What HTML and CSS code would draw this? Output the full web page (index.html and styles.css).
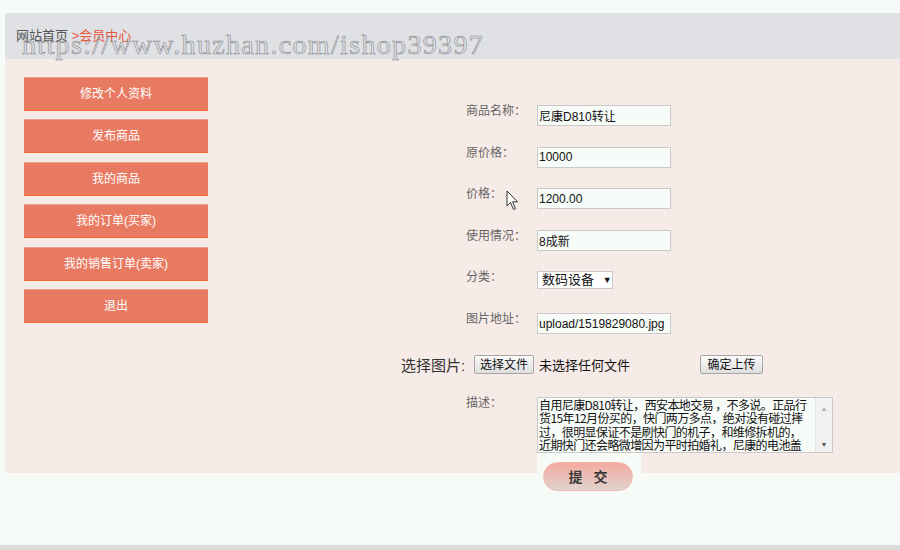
FILE: index.html
```html
<!DOCTYPE html>
<html lang="zh-CN">

<head>
    <meta charset="UTF-8">
    <title>会员中心 - 发布商品</title>
    <link rel="stylesheet" href="styles.css">
</head>

<body>
    <div class="page">
        <div class="top">
            <p class="crumb">网站首页 <span>&gt;会员中心</span></p>
            <div class="mark">https://www.huzhan.com/ishop39397</div>
        </div>

        <div class="main">
            <!-- member menu -->
            <ul class="side">
                <li><a href="#">修改个人资料</a></li>
                <li><a href="#">发布商品</a></li>
                <li><a href="#">我的商品</a></li>
                <li><a href="#">我的订单(买家)</a></li>
                <li><a href="#">我的销售订单(卖家)</a></li>
                <li><a href="#">退出</a></li>
            </ul>

            <form class="goods">
                <div class="row">
                    <label>商品名称：</label>
                    <input type="text" value="尼康D810转让">
                </div>
                <div class="row">
                    <label>原价格：</label>
                    <input type="text" value="10000">
                </div>
                <div class="row">
                    <label>价格：</label>
                    <input type="text" value="1200.00">
                </div>
                <div class="row">
                    <label>使用情况：</label>
                    <input type="text" value="8成新">
                </div>
                <div class="row row-sel">
                    <label>分类：</label>
                    <div class="select">数码设备 <span class="arrow">▼</span></div>
                </div>
                <div class="row">
                    <label>图片地址：</label>
                    <input type="text" value="upload/1519829080.jpg">
                </div>

                <div class="upload">
                    <span class="up-title">选择图片:</span>
                    <span class="file">
                        <button type="button" class="btn">选择文件</button>
                        <span class="none">未选择任何文件</span>
                    </span>
                    <button type="button" class="btn btn-up">确定上传</button>
                </div>

                <div class="row row-desc">
                    <label>描述：</label>
                    <div class="desc">
                        <textarea>自用尼康D810转让，西安本地交易 ，不多说。正品行
货15年12月份买的，快门两万多点，绝对没有碰过摔
过，很明显保证不是刷快门的机子，和维修拆机的，
近期快门还会略微增因为平时拍婚礼，尼康的电池盖
有点松动，其他一切正常。</textarea>
                        <div class="bar"><span>▲</span><span>▼</span></div>
                    </div>
                </div>

                <div class="send">
                    <button type="button" class="submit">提 交</button>
                </div>
            </form>
        </div>
    </div>
    <div class="foot"></div>

    <svg class="pointer" width="14" height="22" viewBox="0 0 14 22">
        <path d="M1 1 L1 16 L4.5 12.5 L7.5 19.5 L9.5 18.6 L6.6 11.8 L11.5 11.8 Z" fill="#fff" stroke="#333" stroke-width="1" stroke-linejoin="round"/>
    </svg>
</body>

</html>
```

FILE: styles.css
```css
body {
    margin: 0;
    background-color: #f7fbf7;
    font-family: "Liberation Sans", "Noto Sans CJK SC", sans-serif;
    font-size: 12px;
    color: #333;
}

.page {
    margin-left: 5px;
    padding-top: 13px;
}

.top {
    position: relative;
    height: 46px;
    background-color: #dfe1e5;
}

.crumb {
    margin: 0;
    padding-left: 11px;
    line-height: 46px;
    font-size: 13px;
    color: #555;
}

.crumb span {
    color: #e9553f;
}

/* hollow site address laid over the header */
.mark {
    position: absolute;
    left: 17px;
    top: 18px;
    font-family: "Liberation Serif", serif;
    font-size: 28px;
    line-height: 28px;
    letter-spacing: 1.33px;
    color: transparent;
    -webkit-text-stroke: 0.6px #8a8a8a;
    white-space: nowrap;
}

.main {
    display: flex;
    height: 414px;
    background-color: #f7ebe7;
}

.side {
    list-style: none;
    margin: 0;
    padding: 18px 0 0 19px;
    width: 184px;
}

.side li {
    margin-bottom: 8.4px;
}

.side a {
    display: block;
    height: 32px;
    line-height: 32px;
    text-align: center;
    color: #fff;
    text-decoration: none;
    background-color: #e97a62;
    border-top: 1px solid #eea08e;
    border-bottom: 1px solid #f26a2e;
}

.goods {
    margin: 0 0 0 193px;
    padding-top: 46px;
}

.row {
    display: flex;
    align-items: flex-start;
    height: 21px;
    margin-bottom: 20.5px;
    padding-left: 65px;
}

.row label {
    width: 71px;
    line-height: 12px;
    color: #666;
}

.row input {
    box-sizing: border-box;
    width: 134px;
    height: 21px;
    margin: 0;
    padding: 0 1px;
    border: 1px solid #c9c9c9;
    background-color: #f7fcf8;
    font-family: "Liberation Sans", "Noto Sans CJK SC", sans-serif;
    font-size: 12px;
    color: #111;
}

.row-sel {
    height: 18px;
    margin-bottom: 24px;
}

.select {
    box-sizing: border-box;
    width: 76px;
    height: 18px;
    padding-left: 4px;
    border: 1px solid #c9c9c9;
    background-color: #fff;
    font-size: 13px;
    line-height: 16px;
    color: #111;
}

.select .arrow {
    margin-left: 5px;
    font-size: 9px;
    vertical-align: 1px;
}

.upload {
    display: flex;
    align-items: center;
    height: 19px;
    margin-bottom: 23px;
}

.up-title {
    width: 73px;
    font-size: 15px;
    color: #333;
}

.file {
    display: flex;
    align-items: center;
    width: 226px;
}

.btn {
    box-sizing: border-box;
    width: 60px;
    height: 19px;
    padding: 0;
    border: 1px solid #a6a6a6;
    border-radius: 2px;
    background: linear-gradient(#fbfbfb, #dedede);
    font-family: "Noto Sans CJK SC", sans-serif;
    font-size: 12px;
    line-height: 16px;
    color: #111;
}

.none {
    margin-left: 5px;
    font-size: 13px;
    color: #111;
}

.btn-up {
    width: 63px;
}

.row-desc {
    height: 56px;
    margin-bottom: 0;
}

.desc {
    display: flex;
    width: 296px;
    height: 56px;
    box-sizing: border-box;
    border: 1px solid #c9c9c9;
    background-color: #f7fcf8;
}

.desc textarea {
    flex: 1;
    margin: 0;
    padding: 0 0 0 1px;
    border: none;
    overflow: hidden;
    resize: none;
    white-space: pre;
    background: transparent;
    font-family: "Noto Sans CJK SC", sans-serif;
    font-size: 12px;
    line-height: 13.5px;
    letter-spacing: -0.6px;
    color: #111;
}

.bar {
    display: flex;
    flex-direction: column;
    justify-content: space-between;
    width: 16px;
    padding: 7px 0 4px;
    border-left: 1px solid #e4e4e4;
    background-color: #f1f1f1;
    font-size: 7px;
    text-align: center;
    color: #555;
}

.bar span:first-child {
    color: #aaa;
}

.send {
    width: 98px;
    margin-left: 136px;
    padding: 9px 0 0 6px;
    background-color: #f7fbf7;
}

.submit {
    width: 90px;
    height: 29px;
    padding: 0;
    border: 1px solid #f1b9ae;
    border-radius: 15px;
    background: linear-gradient(#f4aa9e, #e1d3d0);
    font-family: "Noto Sans CJK SC", sans-serif;
    font-size: 14px;
    font-weight: 600;
    letter-spacing: 4px;
    text-indent: 4px;
    color: #3a3a3a;
}

.foot {
    height: 5px;
    margin-top: 72px;
    background-color: #dcdcdc;
}

.pointer {
    position: absolute;
    left: 506px;
    top: 190px;
}
```
